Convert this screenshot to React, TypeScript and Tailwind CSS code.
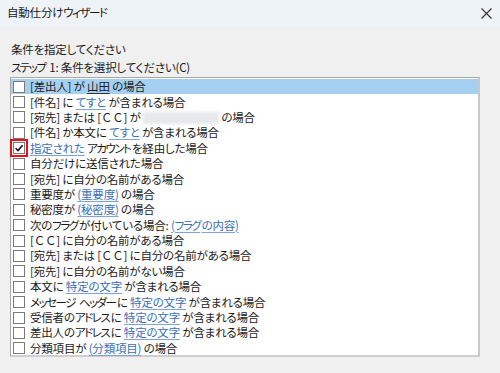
import React from 'react';

type Seg = { t: string; link?: boolean; blur?: boolean };

const ROWS: { parts: Seg[]; checked?: boolean }[] = [
  { parts: [{ t: '[差出人] が ' }, { t: '山田', link: true }, { t: ' の場合' }] },
  { parts: [{ t: '[件名] に ' }, { t: 'てすと', link: true }, { t: ' が含まれる場合' }] },
  { parts: [{ t: '[宛先] または [ＣＣ] が ' }, { t: '', blur: true }, { t: ' の場合' }] },
  { parts: [{ t: '[件名] か本文に ' }, { t: 'てすと', link: true }, { t: ' が含まれる場合' }] },
  { parts: [{ t: '指定された', link: true }, { t: ' アカウントを経由した場合' }], checked: true },
  { parts: [{ t: '自分だけに送信された場合' }] },
  { parts: [{ t: '[宛先] に自分の名前がある場合' }] },
  { parts: [{ t: '重要度が ' }, { t: '(重要度)', link: true }, { t: ' の場合' }] },
  { parts: [{ t: '秘密度が ' }, { t: '(秘密度)', link: true }, { t: ' の場合' }] },
  { parts: [{ t: '次のフラグが付いている場合: ' }, { t: '(フラグの内容)', link: true }] },
  { parts: [{ t: '[ＣＣ] に自分の名前がある場合' }] },
  { parts: [{ t: '[宛先] または [ＣＣ] に自分の名前がある場合' }] },
  { parts: [{ t: '[宛先] に自分の名前がない場合' }] },
  { parts: [{ t: '本文に ' }, { t: '特定の文字', link: true }, { t: ' が含まれる場合' }] },
  { parts: [{ t: 'メッセージ ヘッダーに ' }, { t: '特定の文字', link: true }, { t: ' が含まれる場合' }] },
  { parts: [{ t: '受信者のアドレスに ' }, { t: '特定の文字', link: true }, { t: ' が含まれる場合' }] },
  { parts: [{ t: '差出人のアドレスに ' }, { t: '特定の文字', link: true }, { t: ' が含まれる場合' }] },
  { parts: [{ t: '分類項目が ' }, { t: '(分類項目)', link: true }, { t: ' の場合' }] },
];

const FONT = { fontFamily: '"Noto Sans CJK JP", "Noto Sans", sans-serif', fontFeatureSettings: '"palt"' };

// katakana runs are narrower in the original UI font; full-width latin keeps its em box
function Jp({ text }: { text: string }) {
  const runs = text.match(/[\u30A0-\u30FF]+|[Ａ-Ｚ]+|[^\u30A0-\u30FFＡ-Ｚ]+/g) ?? [];
  return (
    <>
      {runs.map((r, i) =>
        /^[\u30A0-\u30FF]/.test(r) ? (
          <span key={i} className="mr-[1.5px] tracking-[-1.5px]">{r}</span>
        ) : /^[Ａ-Ｚ]/.test(r) ? (
          <span key={i} style={{ fontFeatureSettings: 'normal' }}>{r}</span>
        ) : (
          <span key={i}>{r}</span>
        )
      )}
    </>
  );
}

function CheckBox({ checked }: { checked?: boolean }) {
  return (
    <span className="relative flex h-[12px] w-[12px] shrink-0 items-center justify-center border border-[#7a7a7a] bg-white">
      {checked && (
        <svg width="10" height="10" viewBox="0 0 10 10" className="absolute left-[0px] top-[0px]">
          <path d="M1.6 5.2 L4 7.6 L8.6 2.2" fill="none" stroke="#111" strokeWidth="1.6" />
        </svg>
      )}
      {checked && <span className="absolute left-[-4px] top-[-4px] h-[18px] w-[18px] border-2 border-[#e8101a]" />}
    </span>
  );
}

export default function App() {
  return (
    <div className="h-[373px] w-[500px] overflow-hidden bg-[#f0f0f0] text-[#1a1a1a] tracking-[-0.2px]" style={FONT}>
      <div className="flex h-[26px] items-center justify-between bg-[#eef3f8] pl-[7px] pr-[8px] text-[11.5px]">
        <span>
          <Jp text="自動仕分けウィザード" />
        </span>
        <svg width="11" height="11" viewBox="0 0 11 11">
          <path d="M0.5 0.5 L10.5 10.5 M10.5 0.5 L0.5 10.5" stroke="#333" strokeWidth="1.1" />
        </svg>
      </div>
      <div className="px-[10px] pt-[14px] text-[11.5px] leading-[18px]">
        <div className="pl-[1px]">条件を指定してください</div>
        <div className="pl-[1px]">
          <Jp text="ステップ 1: 条件を選択してください(C)" />
        </div>
        <div className="mt-[1px] h-[280px] w-[470px] border border-[#a8a8a8] border-r-2 border-r-[#c8c8c8] border-b-2 border-b-[#cfcfcf] bg-white pt-[1px]">
          {ROWS.map((row, i) => (
            <div
              key={i}
              className={`flex h-[15.4px] items-center gap-[5px] pl-[2px] whitespace-nowrap ${i === 0 ? 'bg-[#a6d0f2]' : ''}`}
            >
              <CheckBox checked={row.checked} />
              <span className="leading-[15px]">
                {row.parts.map((p, j) =>
                  p.blur ? (
                    <span key={j} className="inline-block h-[12px] w-[76px] translate-y-[2px] bg-[#e6e8ec] blur-[1.5px]" />
                  ) : p.link ? (
                    <span
                      key={j}
                      className={
                        i === 0
                          ? 'underline decoration-[#333] underline-offset-2'
                          : 'text-[#3b6fb6] underline decoration-[#7fa3d3] underline-offset-2'
                      }
                    >
                      <Jp text={p.t} />
                    </span>
                  ) : (
                    <Jp key={j} text={p.t} />
                  )
                )}
              </span>
            </div>
          ))}
        </div>
      </div>
    </div>
  );
}
